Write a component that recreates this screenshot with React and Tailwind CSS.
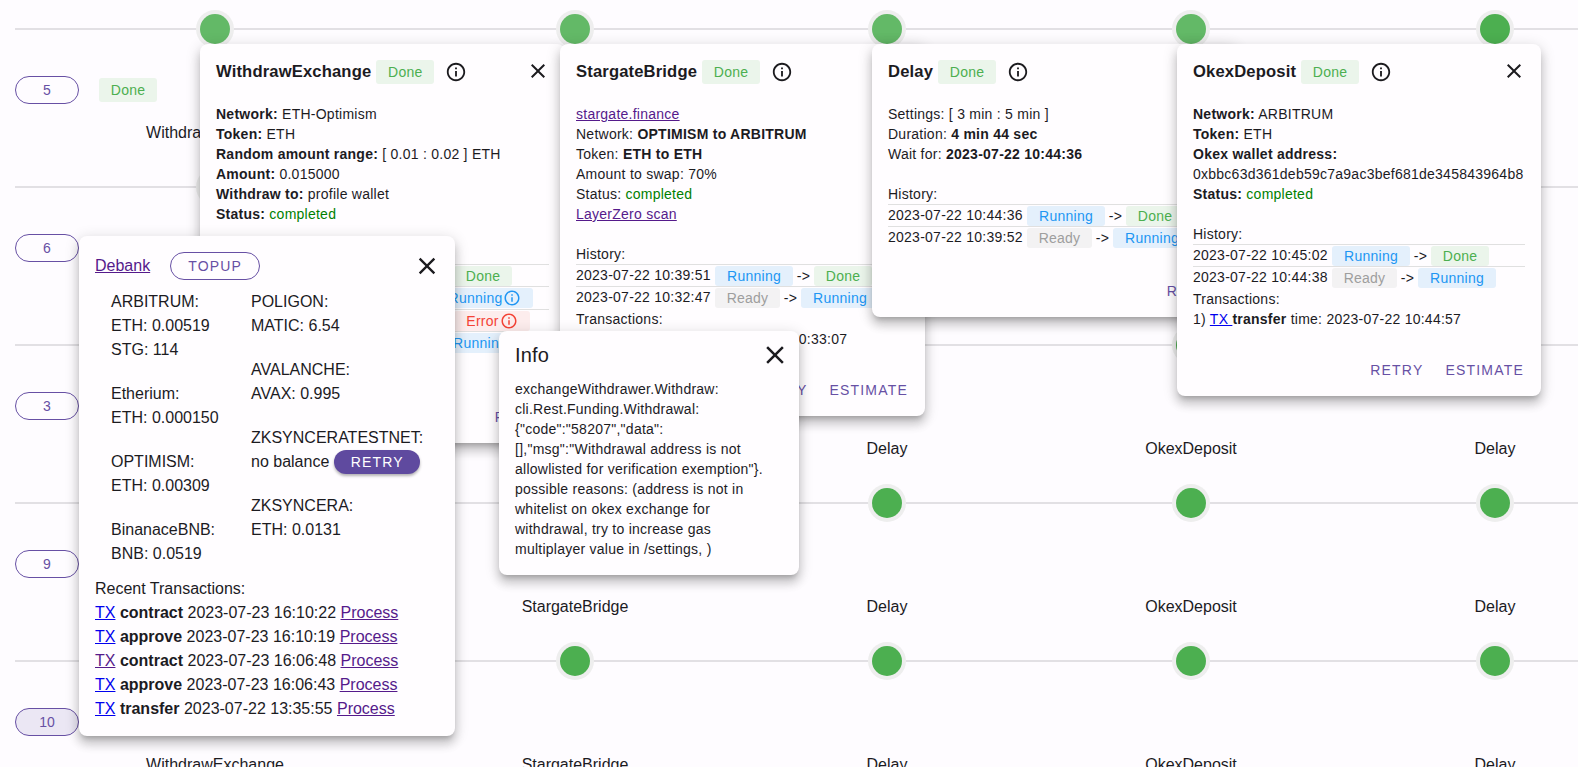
import React from "react";

const font = { fontFamily: "'Liberation Sans', Arial, sans-serif" };

function InfoIcon({ className }) {
  return (
    <svg viewBox="0 0 24 24" className={className} fill="currentColor">
      <path d="M11 7h2v2h-2zm0 4h2v6h-2zm1-9C6.48 2 2 6.48 2 12s4.48 10 10 10 10-4.48 10-10S17.52 2 12 2zm0 18c-4.41 0-8-3.59-8-8s3.59-8 8-8 8 3.59 8 8-3.59 8-8 8z" />
    </svg>
  );
}

function CloseIcon({ className }) {
  return (
    <svg viewBox="0 0 24 24" className={className} fill="currentColor">
      <path d="M19 6.41 17.59 5 12 10.59 6.41 5 5 6.41 10.59 12 5 17.59 6.41 19 12 13.41 17.59 19 19 17.59 13.41 12z" />
    </svg>
  );
}

function Chip({ kind, icon, title }) {
  const styles = {
    Done: "bg-[#ebf5eb] text-[#4caf50] w-[58px]",
    Running: "bg-[#e4f0fc] text-[#2196f3] w-[78px]",
    Ready: "bg-[#f3f2f3] text-[#9e9e9e] w-[65px]",
    Error: "bg-[#fdeded] text-[#f44336] w-[74px]",
  };
  const box = title ? "h-6" : "h-5";
  let extra = "";
  if (icon && kind === "Running") extra = "!w-[92px] pr-1";
  if (icon && kind === "Error") extra = "!w-[76px]";
  return (
    <span className={`inline-flex shrink-0 items-center justify-center rounded-[3px] text-[14px] tracking-[0.25px] ${box} ${styles[kind]} ${extra}`}>
      {kind}
      {icon ? <InfoIcon className="ml-px h-[18px] w-[18px]" /> : null}
    </span>
  );
}

function HistoryRow({ date, from, to, toIcon }) {
  return (
    <div className="flex h-[22.3px] items-center gap-[3px] whitespace-nowrap border-t border-[#e0e0e0] pt-px">
      <span className="mb-[2px] mr-px w-[135px] shrink-0">{date}</span>
      <Chip kind={from} />
      <span className="w-[15px] shrink-0 text-center">-&gt;</span>
      <Chip kind={to} icon={toIcon} />
    </div>
  );
}

function CardHeader({ title }) {
  return (
    <div className="flex h-6 items-center">
      <span className="whitespace-nowrap text-[16.6px] font-bold leading-6 tracking-[0.15px] text-[#1c1b1f]">{title}</span>
      <span className="ml-[5px]"><Chip kind="Done" title /></span>
      <InfoIcon className="ml-[11px] h-[22px] w-[22px] shrink-0 text-[#1c1b1f]" />
    </div>
  );
}

function Action({ children }) {
  return <span className="text-[14px] font-medium tracking-[1.2px] text-[#6750a4]">{children}</span>;
}

function Card({ pos, title, children, actions, hideClose }) {
  return (
    <div className={`absolute rounded-[8px] bg-[#fffdff] px-4 pt-4 text-[14px] leading-5 tracking-[0.25px] text-[#1c1b1f] shadow-[0_5px_5px_-3px_rgba(0,0,0,0.2),0_8px_10px_1px_rgba(0,0,0,0.14),0_3px_14px_2px_rgba(0,0,0,0.12)] ${pos}`}>
      <CardHeader title={title} />
      {hideClose ? null : (
        <button className="absolute right-[15px] top-[15px] text-[#1c1b1f]"><CloseIcon className="h-6 w-6" /></button>
      )}
      <div className="mt-[20px]">{children}</div>
      <div className="absolute bottom-4 right-[17px] flex h-5 items-center gap-[22px]">
        {actions.map((a) => <Action key={a}>{a}</Action>)}
      </div>
    </div>
  );
}

const B = ({ children }) => <b className="font-bold">{children}</b>;
const Visited = ({ children }) => <a href="#v" className="text-[#551a8b] underline">{children}</a>;
const Blue = ({ children }) => <a href="#b" className="text-[#0000ee] underline">{children}</a>;
const Green = ({ children }) => <span className="text-[#008000]">{children}</span>;

function Step({ name, light }) {
  return (
    <div className="flex w-[304px] shrink-0 flex-col items-center first:w-[400px] [&:nth-child(2)]:w-[320px]">
      <span className={`h-[30px] w-[30px] rounded-full shadow-[0_0_0_4px_#eeeeee,0_2px_2px_rgba(0,0,0,0.14)] ${light ? "bg-[#63b967]" : "bg-[#4caf50]"}`} />
      <span className="mt-[80px] text-[16px] leading-[18px] text-[#1c1b1f]">{name}</span>
    </div>
  );
}

const names = ["WithdrawExchange", "StargateBridge", "Delay", "OkexDeposit", "Delay"];

function Row({ id, active, first, chip }) {
  return (
    <div className="h-[158px]">
      <div className="grid">
        <div className="col-start-1 row-start-1 mt-[14px] ml-[15px] h-[2px] bg-[#e2e0e4]" />
        <div className="col-start-1 row-start-1 ml-[15px] flex w-[1640px]">
          {names.map((n, i) => (
            <Step key={i} name={n} light={first && i < 4} />
          ))}
        </div>
        <div className="col-start-1 row-start-1 ml-[15px] mt-[62px] flex h-7 items-center self-start">
          <span className={`flex h-7 w-16 items-center justify-center rounded-full border border-[#6750a4] text-[14px] text-[#6750a4] ${active ? "bg-[#ebe7f4]" : ""}`}>{id}</span>
          {chip ? <span className="ml-5"><Chip kind="Done" title /></span> : null}
        </div>
      </div>
    </div>
  );
}

function Balance({ lines }) {
  return (
    <div className="mb-5">
      {lines.map((l, i) => <div key={i} className="flex h-6 items-center whitespace-nowrap">{l}</div>)}
    </div>
  );
}

function TxLine({ kind, date, visited }) {
  return (
    <div className="h-6 whitespace-nowrap">
      {visited ? <Visited>TX</Visited> : <Blue>TX</Blue>} <B>{kind}</B> {date} <Visited>Process</Visited>
    </div>
  );
}

export default function App() {
  return (
    <div style={font} className="relative h-[767px] w-[1578px] overflow-hidden bg-[#fefcff] pt-[14px]">
      <Row id="5" first chip />
      <Row id="6" />
      <Row id="3" />
      <Row id="9" />
      <Row id="10" active />

      <Card pos="left-[200px] top-[44px] h-[399px] w-[365px]" title="WithdrawExchange" actions={["RETRY"]}>
        <div><B>Network:</B> ETH-Optimism</div>
        <div><B>Token:</B> ETH</div>
        <div><B>Random amount range:</B> [ 0.01 : 0.02 ] ETH</div>
        <div><B>Amount:</B> 0.015000</div>
        <div><B>Withdraw to:</B> profile wallet</div>
        <div><B>Status:</B> <Green>completed</Green></div>
        <div className="mt-5">History:</div>
        <HistoryRow date="2023-07-22 10:39:49" from="Running" to="Done" />
        <HistoryRow date="2023-07-22 10:39:20" from="Ready" to="Running" toIcon />
        <HistoryRow date="2023-07-22 10:32:40" from="Running" to="Error" toIcon />
        <HistoryRow date="2023-07-22 10:32:12" from="Ready" to="Running" />
      </Card>

      <Card pos="left-[560px] top-[44px] h-[372px] w-[365px]" title="StargateBridge" hideClose actions={["RETRY", "ESTIMATE"]}>
        <div><Visited>stargate.finance</Visited></div>
        <div>Network: <B>OPTIMISM to ARBITRUM</B></div>
        <div>Token: <B>ETH to ETH</B></div>
        <div>Amount to swap: 70%</div>
        <div>Status: <Green>completed</Green></div>
        <div><Visited>LayerZero scan</Visited></div>
        <div className="mt-5">History:</div>
        <HistoryRow date="2023-07-22 10:39:51" from="Running" to="Done" />
        <HistoryRow date="2023-07-22 10:32:47" from="Ready" to="Running" />
        <div>Transactions:</div>
        <div className="whitespace-nowrap">1) <Blue>TX </Blue><B>contract</B> time: 2023-07-22 10:33:07</div>
      </Card>

      <Card pos="left-[872px] top-[44px] h-[273px] w-[365px]" title="Delay" hideClose actions={["RETRY"]}>
        <div>Settings: [ 3 min : 5 min ]</div>
        <div>Duration: <B>4 min 44 sec</B></div>
        <div>Wait for: <B>2023-07-22 10:44:36</B></div>
        <div className="mt-5">History:</div>
        <HistoryRow date="2023-07-22 10:44:36" from="Running" to="Done" />
        <HistoryRow date="2023-07-22 10:39:52" from="Ready" to="Running" />
      </Card>

      <Card pos="left-[1177px] top-[44px] h-[352px] w-[364px]" title="OkexDeposit" actions={["RETRY", "ESTIMATE"]}>
        <div><B>Network:</B> ARBITRUM</div>
        <div><B>Token:</B> ETH</div>
        <div><B>Okex wallet address:</B></div>
        <div className="whitespace-nowrap">0xbbc63d361deb59c7a9ac3bef681de345843964b8</div>
        <div><B>Status:</B> <Green>completed</Green></div>
        <div className="mt-5">History:</div>
        <HistoryRow date="2023-07-22 10:45:02" from="Running" to="Done" />
        <HistoryRow date="2023-07-22 10:44:38" from="Ready" to="Running" />
        <div>Transactions:</div>
        <div className="whitespace-nowrap">1) <Blue>TX </Blue><B>transfer</B> time: 2023-07-22 10:44:57</div>
      </Card>

      <div className="absolute left-[79px] top-[236px] h-[500px] w-[376px] rounded-[8px] bg-[#fffdff] px-4 pt-4 text-[16px] leading-6 text-[#1c1b1f] shadow-[0_5px_5px_-3px_rgba(0,0,0,0.2),0_8px_10px_1px_rgba(0,0,0,0.14),0_3px_14px_2px_rgba(0,0,0,0.12)]">
        <div className="flex h-7 items-center">
          <Visited>Debank</Visited>
          <span className="ml-5 flex h-7 w-[90px] items-center justify-center rounded-full border border-[#6750a4] text-[14px] tracking-[1.2px] text-[#6750a4]">TOPUP</span>
          <button className="ml-auto mr-[-2px] text-[#1c1b1f]"><CloseIcon className="h-7 w-7" /></button>
        </div>
        <div className="mt-[10px] flex pl-4">
          <div className="w-[140px] shrink-0">
            <Balance lines={["ARBITRUM:", "ETH: 0.00519", "STG: 114"]} />
            <Balance lines={["Etherium:", "ETH: 0.000150"]} />
            <Balance lines={["OPTIMISM:", "ETH: 0.00309"]} />
            <Balance lines={["BinanaceBNB:", "BNB: 0.0519"]} />
          </div>
          <div>
            <Balance lines={["POLIGON:", "MATIC: 6.54"]} />
            <Balance lines={["AVALANCHE:", "AVAX: 0.995"]} />
            <Balance
              lines={[
                "ZKSYNCERATESTNET:",
                <>
                  no balance
                  <span className="ml-[5px] flex h-6 w-[86px] items-center justify-center rounded-full bg-[#5f4a9f] text-[14px] tracking-[1.2px] text-white shadow-[0_2px_3px_rgba(0,0,0,0.3)]">RETRY</span>
                </>,
              ]}
            />
            <Balance lines={["ZKSYNCERA:", "ETH: 0.0131"]} />
          </div>
        </div>
        <div className="mt-[-9px]">Recent Transactions:</div>
        <TxLine kind="contract" date="2023-07-23 16:10:22" />
        <TxLine kind="approve" date="2023-07-23 16:10:19" />
        <TxLine kind="contract" date="2023-07-23 16:06:48" visited />
        <TxLine kind="approve" date="2023-07-23 16:06:43" />
        <TxLine kind="transfer" date="2023-07-22 13:35:55" />
      </div>

      <div className="absolute left-[499px] top-[331px] h-[244px] w-[300px] rounded-[8px] bg-[#fffdff] px-4 pt-[10px] text-[#1c1b1f] shadow-[0_5px_5px_-3px_rgba(0,0,0,0.2),0_8px_10px_1px_rgba(0,0,0,0.14),0_3px_14px_2px_rgba(0,0,0,0.12)]">
        <div className="flex h-7 items-center text-[20px] tracking-[0.15px]">
          Info
          <CloseIcon className="ml-auto mr-[-7px] h-[30px] w-[30px]" />
        </div>
        <div className="mt-[10px] text-[14px] leading-5 tracking-[0.25px]">
          exchangeWithdrawer.Withdraw: cli.Rest.Funding.Withdrawal: {'{"code":"58207","data":[],"msg":"Withdrawal address is not allowlisted for verification exemption"}'}. possible reasons: (address is not in whitelist on okex exchange for withdrawal, try to increase gas multiplayer value in /settings, )
        </div>
      </div>
    </div>
  );
}
